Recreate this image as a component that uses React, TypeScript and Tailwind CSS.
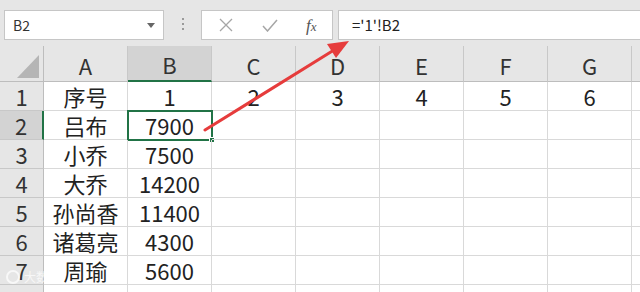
const COLS = ["A", "B", "C", "D", "E", "F", "G", ""];

const ROWS: string[][] = [
  ["序号", "1", "2", "3", "4", "5", "6", ""],
  ["吕布", "7900", "", "", "", "", "", ""],
  ["小乔", "7500", "", "", "", "", "", ""],
  ["大乔", "14200", "", "", "", "", "", ""],
  ["孙尚香", "11400", "", "", "", "", "", ""],
  ["诸葛亮", "4300", "", "", "", "", "", ""],
  ["周瑜", "5600", "", "", "", "", "", ""],
  ["", "", "", "", "", "", "", ""],
];

const font = "font-['Microsoft_YaHei','Noto_Sans_CJK_SC',sans-serif]";

export default function App() {
  return (
    <div className={`relative w-[640px] h-[292px] overflow-hidden bg-white ${font}`}>
      {/* formula bar */}
      <div className="flex items-start h-[46px] bg-[#e6e6e6] pt-[10px]">
        <div className="ml-[4px] flex items-center justify-between w-[160px] h-[30px] bg-white border border-[#c6c6c6] pl-[8px] pr-[8px]">
          <span className="text-[14px] text-[#333]">B2</span>
          <svg width="8" height="5" viewBox="0 0 8 5">
            <path d="M0 0h8L4 5z" fill="#666" />
          </svg>
        </div>
        <div className="flex flex-col gap-[3px] w-[37px] items-center pt-[8px]">
          <span className="w-[2px] h-[2px] bg-[#9a9a9a]" />
          <span className="w-[2px] h-[2px] bg-[#9a9a9a]" />
          <span className="w-[2px] h-[2px] bg-[#9a9a9a]" />
        </div>
        <div className="flex items-center w-[132px] h-[30px] bg-white border border-[#c6c6c6]">
          <svg className="ml-[17px]" width="14" height="14" viewBox="0 0 14 14">
            <path d="M1 1l12 12M13 1L1 13" stroke="#a6a6a6" strokeWidth="1.3" fill="none" />
          </svg>
          <svg className="ml-[29px]" width="16" height="13" viewBox="0 0 16 13">
            <path d="M1 7l4.5 5L15 1" stroke="#a6a6a6" strokeWidth="1.5" fill="none" />
          </svg>
          <span className="ml-[28px] text-[17px] italic text-[#555] font-['Liberation_Serif',serif] leading-none">
            f<span className="text-[13px]">x</span>
          </span>
        </div>
        <div className="ml-[5px] flex-1 h-[30px] bg-white border border-[#c6c6c6] border-r-0 flex items-center pl-[13px]">
          <span className="text-[15px] text-[#222]">='1'!B2</span>
        </div>
      </div>

      {/* sheet */}
      <div className="grid grid-cols-[44px_repeat(7,84px)_84px] grid-rows-[36px_repeat(8,29px)]">
        <div className="relative bg-[#e6e6e6] border-r border-b border-[#bdbdbd]">
          <svg className="absolute right-[4px] bottom-[3px]" width="22" height="23" viewBox="0 0 22 23">
            <path d="M22 0V23H0z" fill="#b5b5b5" />
          </svg>
        </div>
        {COLS.map((c, i) => (
          <div
            key={"h" + i}
            className={`flex items-end justify-center pb-[2px] text-[22px] leading-[28px] text-[#333] border-r border-[#c8c8c8] ${
              c === "B" ? "bg-[#d3d3d3] border-b-2 border-b-[#217346]" : "bg-[#e6e6e6] border-b border-b-[#bdbdbd]"
            }`}
          >
            {c}
          </div>
        ))}
        {ROWS.map((row, r) => (
          <div key={"r" + r} className="contents">
            <div
              className={`flex items-center justify-center text-[22px] text-[#333] border-b border-[#c8c8c8] ${
                r === 1 ? "bg-[#d3d3d3] border-r-2 border-r-[#217346]" : "bg-[#e6e6e6] border-r border-r-[#bdbdbd]"
              }`}
            >
              {r < 7 ? r + 1 : ""}
            </div>
            {row.map((v, c) => (
              <div
                key={c}
                className="relative flex items-center justify-center text-[22px] text-[#222] border-r border-b border-[#d9d9d9]"
              >
                {v}
                {r === 1 && c === 1 && (
                  <div className="absolute -left-[1px] -top-[1px] w-[86px] h-[31px] border-2 border-[#217346]">
                    <span className="absolute -right-[4px] -bottom-[4px] w-[6px] h-[6px] bg-[#217346] border border-white" />
                  </div>
                )}
              </div>
            ))}
          </div>
        ))}
      </div>

      {/* annotation arrow */}
      <svg className="absolute left-0 top-0 pointer-events-none" width="640" height="292" viewBox="0 0 640 292">
        <line x1="205" y1="130" x2="334" y2="50" stroke="#e63c3c" strokeWidth="3" strokeLinecap="round" />
        <path d="M349 41L327 44L336 58z" fill="#e63c3c" />
      </svg>

      {/* watermark */}
      <div className="absolute left-[6px] bottom-[6px] flex items-center gap-[4px] text-white/70 text-[12px]">
        <span className="w-[14px] h-[14px] rounded-full border-2 border-white/70" />
        <span>大数据</span>
      </div>
    </div>
  );
}
